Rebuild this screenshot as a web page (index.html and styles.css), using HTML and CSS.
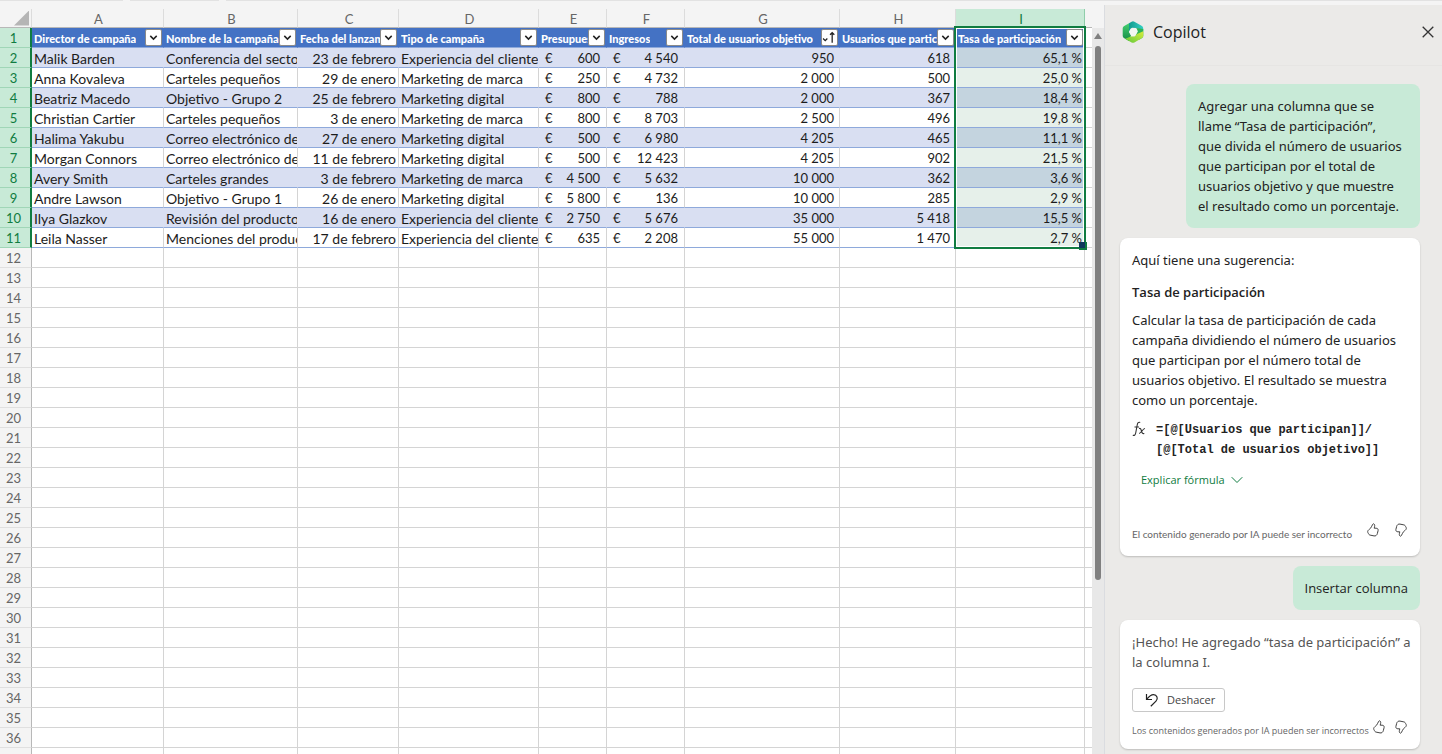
FILE: index.html
```html
<!DOCTYPE html>
<html lang="es">
<head>
<meta charset="utf-8">
<title>Campañas</title>
<link rel="stylesheet" href="styles.css">
</head>
<body>
<svg class="defs" width="0" height="0" aria-hidden="true">
  <symbol id="chev" viewBox="0 0 14 14"><path d="M4 5.5l3 3 3-3" fill="none" stroke="#222" stroke-width="1.4"/></symbol>
  <symbol id="sort" viewBox="0 0 14 14"><path d="M1 8l2 2 2-2" fill="none" stroke="#222" stroke-width="1.2"/><path d="M9.500 12V2.500M7.500 4.500l2-2 2 2" fill="none" stroke="#222" stroke-width="1.200"/></symbol>
  <symbol id="up" viewBox="0 0 14 14"><path d="M1.700 8.500C2 6.800 3.600 6.300 4.500 5.300 5.500 4 6 2.500 6.700 1.300 7.300.3 8.600.9 8.700 2.300 8.700 3.300 8.500 4.200 8.200 5.200h1.900c1.600 0 2.300 1.100 2 2.400l-.8 3.100c-.4 1.600-1.700 2.500-3.300 2.200L4.100 12.100C3 11.800 2.600 11.100 2.400 10.500 2.200 9.900 1.500 9.400 1.700 8.500z" fill="none" stroke="#444" stroke-width="1"/></symbol>
</svg>
<div class="ribbon"><span></span><span></span><span></span></div>
<div class="app">
  <main class="sheet">
    <div class="grid">
      <table>
        <colgroup><col class="w-n"><col class="w-a"><col class="w-b"><col class="w-c"><col class="w-d"><col class="w-e"><col class="w-f"><col class="w-g"><col class="w-h"><col class="w-i"><col></colgroup>
        <thead>
          <tr><th class="corner"><i></i></th><th>A</th><th>B</th><th>C</th><th>D</th><th>E</th><th>F</th><th>G</th><th>H</th><th class="active">I</th><th class="rest"></th></tr>
        </thead>
        <tbody class="data">
          <tr class="titles"><th>1</th>
            <td><div><span>Director de campaña</span><button aria-label="Filtrar director"><svg><use href="#chev"/></svg></button></div></td>
            <td><div><span>Nombre de la campaña</span><button aria-label="Filtrar nombre"><svg><use href="#chev"/></svg></button></div></td>
            <td><div><span>Fecha del lanzamiento</span><button aria-label="Filtrar fecha"><svg><use href="#chev"/></svg></button></div></td>
            <td><div><span>Tipo de campaña</span><button aria-label="Filtrar tipo"><svg><use href="#chev"/></svg></button></div></td>
            <td><div><span>Presupuesto</span><button aria-label="Filtrar presupuesto"><svg><use href="#chev"/></svg></button></div></td>
            <td><div><span>Ingresos</span><button aria-label="Filtrar ingresos"><svg><use href="#chev"/></svg></button></div></td>
            <td><div><span>Total de usuarios objetivo</span><button aria-label="Ordenar total"><svg><use href="#sort"/></svg></button></div></td>
            <td><div><span>Usuarios que participan</span><button aria-label="Filtrar usuarios"><svg><use href="#chev"/></svg></button></div></td>
            <td class="sel"><div><span>Tasa de participación</span><button aria-label="Filtrar tasa"><svg><use href="#chev"/></svg></button></div><b class="selection"></b></td><td class="rest"></td></tr>
          <tr><th>2</th><td>Malik Barden</td><td>Conferencia del sector</td><td>23 de febrero</td><td>Experiencia del cliente</td><td class="eur">600</td><td class="eur">4 540</td><td>950</td><td>618</td><td>65,1 %</td><td class="rest"></td></tr>
          <tr><th>3</th><td>Anna Kovaleva</td><td>Carteles pequeños</td><td>29 de enero</td><td>Marketing de marca</td><td class="eur">250</td><td class="eur">4 732</td><td>2 000</td><td>500</td><td>25,0 %</td><td class="rest"></td></tr>
          <tr><th>4</th><td>Beatriz Macedo</td><td>Objetivo - Grupo 2</td><td>25 de febrero</td><td>Marketing digital</td><td class="eur">800</td><td class="eur">788</td><td>2 000</td><td>367</td><td>18,4 %</td><td class="rest"></td></tr>
          <tr><th>5</th><td>Christian Cartier</td><td>Carteles pequeños</td><td>3 de enero</td><td>Marketing de marca</td><td class="eur">800</td><td class="eur">8 703</td><td>2 500</td><td>496</td><td>19,8 %</td><td class="rest"></td></tr>
          <tr><th>6</th><td>Halima Yakubu</td><td>Correo electrónico de</td><td>27 de enero</td><td>Marketing digital</td><td class="eur">500</td><td class="eur">6 980</td><td>4 205</td><td>465</td><td>11,1 %</td><td class="rest"></td></tr>
          <tr><th>7</th><td>Morgan Connors</td><td>Correo electrónico de</td><td>11 de febrero</td><td>Marketing digital</td><td class="eur">500</td><td class="eur">12 423</td><td>4 205</td><td>902</td><td>21,5 %</td><td class="rest"></td></tr>
          <tr><th>8</th><td>Avery Smith</td><td>Carteles grandes</td><td>3 de febrero</td><td>Marketing de marca</td><td class="eur">4 500</td><td class="eur">5 632</td><td>10 000</td><td>362</td><td>3,6 %</td><td class="rest"></td></tr>
          <tr><th>9</th><td>Andre Lawson</td><td>Objetivo - Grupo 1</td><td>26 de enero</td><td>Marketing digital</td><td class="eur">5 800</td><td class="eur">136</td><td>10 000</td><td>285</td><td>2,9 %</td><td class="rest"></td></tr>
          <tr><th>10</th><td>Ilya Glazkov</td><td>Revisión del producto</td><td>16 de enero</td><td>Experiencia del cliente</td><td class="eur">2 750</td><td class="eur">5 676</td><td>35 000</td><td>5 418</td><td>15,5 %</td><td class="rest"></td></tr>
          <tr><th>11</th><td>Leila Nasser</td><td>Menciones del producto</td><td>17 de febrero</td><td>Experiencia del cliente</td><td class="eur">635</td><td class="eur">2 208</td><td>55 000</td><td>1 470</td><td>2,7 %</td><td class="rest"></td></tr>
        </tbody>
        <tbody class="blank" id="blank"></tbody>
      </table>
    </div>
    <div class="scroll"><i class="arrow"></i><i class="thumb"></i></div>
  </main>
  <aside class="panel">
    <header>
      <svg class="logo" viewBox="0 0 22 22" aria-hidden="true">
        <defs>
          <linearGradient id="ga" x1="0" y1="0" x2="1" y2="0"><stop offset="0" stop-color="#129c8e"/><stop offset="1" stop-color="#35d0c4"/></linearGradient>
          <linearGradient id="gb" x1="0" y1="0" x2="0" y2="1"><stop offset="0" stop-color="#44d070"/><stop offset="1" stop-color="#148a45"/></linearGradient>
          <linearGradient id="gc" x1="0" y1="1" x2="1" y2="0"><stop offset="0" stop-color="#5fc93c"/><stop offset="1" stop-color="#d8ec3c"/></linearGradient>
        </defs>
        <path d="M7 2.200L1.800 5.200Q.7 6 .7 7.200v7.500q0 1.500 1.200 2.200l5 3L9 14.500 7 11z" fill="url(#gb)"/>
        <path d="M7 2.200L9.600.7q1.400-.8 2.800 0l7.600 4.400q1.200.7 1.200 2.200v2.500L14 7 10 6.800 7 11z" fill="url(#ga)"/>
        <path d="M21.300 8v7q0 1.200-1.200 2l-3 1.700-3.300-4L15 11l-.8-4z" fill="#2eb357"/>
        <path d="M3 17.700l6.600 3.700q1.400.8 2.800 0l7.600-4.500q1.300-.8 1.300-2.200v-4.500L15 13l-2.500 2.500H9z" fill="url(#gc)"/>
        <path d="M9.500 7.300h4q1 0 1.400.9l1 2.300-2.300 3.500q-.5.900-1.500.9H9.300L7 10.800l1.400-2.900q.3-.6 1.100-.6z" fill="#f2f7f1"/>
      </svg>
      <h1>Copilot</h1>
      <button class="close" aria-label="Cerrar"><svg viewBox="0 0 12 12"><path d="M.7.7l10.600 10.600M11.300.7L.7 11.300" stroke="#333" stroke-width="1.300"/></svg></button>
    </header>
    <div class="chat">
      <p class="bubble ask">Agregar una columna que se<br>llame “Tasa de participación”,<br>que divida el número de usuarios<br>que participan por el total de<br>usuarios objetivo y que muestre<br>el resultado como un porcentaje.</p>
      <section class="card">
        <p>Aquí tiene una sugerencia:</p>
        <h2>Tasa de participación</h2>
        <p>Calcular la tasa de participación de cada<br>campaña dividiendo el número de usuarios<br>que participan por el número total de<br>usuarios objetivo. El resultado se muestra<br>como un porcentaje.</p>
        <div class="formula">
          <svg viewBox="0 0 14 16" aria-hidden="true"><path d="M.8 14.200c1.700.7 2.500-.4 2.900-2.200L5.200 4c.4-2 1.200-3.200 3-2.600M2.500 6H7M7 7.500c1.600-.5 2 .5 2.500 2.500s1 3 2.800 2.500M13 7.500c-2-.3-4 5-6 5" fill="none" stroke="#333" stroke-width="1.100"/></svg>
          <code>=[@[Usuarios que participan]]/<br>[@[Total de usuarios objetivo]]</code>
        </div>
        <button class="explain">Explicar fórmula <svg viewBox="0 0 12 8"><path d="M.7 1.200L6 6.500l5.300-5.300" fill="none" stroke="#107c41" stroke-width="1"/></svg></button>
        <footer><small>El contenido generado por IA puede ser incorrecto</small><button aria-label="Me gusta"><svg><use href="#up"/></svg></button><button class="down" aria-label="No me gusta"><svg><use href="#up"/></svg></button></footer>
      </section>
      <button class="bubble insert">Insertar columna</button>
      <section class="card done">
        <p>¡Hecho! He agregado “tasa de participación” a<br>la columna I.</p>
        <button class="undo"><svg viewBox="0 0 14 14" aria-hidden="true"><path d="M1.500 1v5.500H7M1.800 6.200C4 3.500 6 1.700 8.500 1.700c3.500 0 5 4 2.500 6.500L5.800 13.300" fill="none" stroke="#222" stroke-width="1.200"/></svg>Deshacer</button>
        <footer><small>Los contenidos generados por IA pueden ser incorrectos</small><button aria-label="Me gusta"><svg><use href="#up"/></svg></button><button class="down" aria-label="No me gusta"><svg><use href="#up"/></svg></button></footer>
      </section>
    </div>
  </aside>
</div>
<script src="grid.js"></script>
</body>
</html>
```
FILE: grid.js
```js
// Append the unused rows below the data.
const blank = document.getElementById('blank');
for (let n = 12; n <= 37; n++) {
  const row = blank.insertRow();
  const head = document.createElement('th');
  head.textContent = n < 37 ? n : '';
  row.append(head);
  for (let c = 0; c < 10; c++) row.insertCell();
  row.lastElementChild.className = 'rest';
}
```
FILE: styles.css
```css
:root {
  --line: #d4d4d4;
  --green: #107c41;
  --mint: #c8ead7;
  --row: 20px;
}
* { box-sizing: border-box; }
body {
  margin: 0;
  height: 100vh;
  overflow: hidden;
  display: flex;
  flex-direction: column;
  background: #f4f4f4;
  color: #222;
  font-family: "Open Sans", "Noto Sans", sans-serif;
}
.defs { position: absolute; }
button { font: inherit; color: inherit; padding: 0; border: 0; background: none; display: flex; align-items: center; }
p, h1, h2 { margin: 0; }
.ribbon { display: flex; gap: 7px; height: 5px; flex: none; }
.ribbon span { height: 1px; background: #e2e2e2; width: 89px; }
.ribbon span:first-child { width: 123px; }
.ribbon span:last-child { flex: 1; }
.app { display: flex; flex: 1; min-height: 0; }

.sheet { flex: 1; min-width: 0; display: flex; }
.grid { flex: 1; min-width: 0; overflow: hidden; padding-top: 4px; }
table {
  width: 100%;
  table-layout: fixed;
  border-collapse: separate;
  border-spacing: 0;
  font-family: Lato, "Open Sans", sans-serif;
  font-size: 13px;
  line-height: 17px;
}
.w-n { width: 32px; } .w-a { width: 132px; } .w-b { width: 134px; } .w-c { width: 101px; }
.w-d { width: 140px; } .w-e { width: 68px; } .w-f { width: 78px; } .w-g { width: 155px; }
.w-h { width: 116px; } .w-i { width: 129px; }
th { font-weight: 400; padding: 2px 0 0; color: #666; text-align: center; }
thead th {
  height: 19px;
  line-height: 16px;
  border-right: 1px solid #dcdcdc;
  border-bottom: 1px solid #b8b8b8;
}
thead th:not(.corner) { padding-left: 2px; }
thead th.corner { padding-top: 0; }
thead th.rest { border-right: 0; }
thead .active { background: var(--mint); color: var(--green); border-color: #8fcdaa; }
.corner i { display: block; width: 15px; height: 15px; margin-left: 14px; background: #b5b5b5; clip-path: polygon(100% 0, 100% 100%, 0 100%); }
tbody th { height: var(--row); padding-right: 4px; border-right: 1px solid #b8b8b8; border-bottom: 1px solid #e0e0e0; }
.data th { background: var(--mint); color: var(--green); border-right: 2px solid var(--green); border-bottom-color: #a0d6b7; padding-right: 3px; }
td {
  height: var(--row);
  padding: 2px 2px 0;
  background: #fff;
  border-right: 1px solid var(--line);
  border-bottom: 1px solid var(--line);
  white-space: nowrap;
  overflow: hidden;
}
td.rest { border-right: 0; }
.data td { color: #1c1c1c; }
.data td:not(.rest) { border-bottom-color: #8ea9db; }
.data td:nth-child(-n+5) { font-size: 14px; padding-right: 0; }
.data td:nth-child(4) { text-align: right; padding-right: 2px; }
.data td:nth-child(8), .data td:nth-child(9) { text-align: right; padding-right: 5px; }
.data td:nth-child(10) { text-align: right; background: #e6f0ea; }
.data td.eur { text-align: right; padding-left: 6px; padding-right: 6px; }
.eur::before { content: "€"; float: left; }
.data tr:nth-child(even) td:not(.rest) { background: #d9dff2; border-right-color: #d9dff2; }
.data tr:nth-child(even) td:nth-child(10) { background: #c4d4df; }
.data .titles td:not(.rest) {
  background: #4472c4;
  border-right-color: #4472c4;
  color: #fff;
  font-weight: 900;
  font-size: 11px;
  text-align: left;
  padding: 0 1px 0 2px;
}
.titles div { display: flex; justify-content: space-between; align-items: center; height: 19px; }
.titles span { overflow: hidden; padding-top: 1px; }
.titles button { flex: none; width: 17px; height: 17px; background: #fff; border: 1px solid #8a8a8a; border-radius: 2px; }
.titles svg { width: 15px; height: 15px; }
.data .sel { position: relative; overflow: visible; }
.selection {
  position: absolute;
  top: -2px;
  left: -2px;
  right: -2px;
  height: calc(var(--row) * 11 + 3px);
  border: 2px solid var(--green);
  box-shadow: inset 0 0 0 1px #fff;
  pointer-events: none;
}
.selection::after { content: ""; position: absolute; right: -3px; bottom: -3px; width: 6px; height: 6px; background: #10385c; border: solid var(--green); border-width: 0 2px 2px 0; }
.scroll { width: 12px; margin-top: 23px; background: #e8e8e8; display: flex; flex-direction: column; align-items: center; gap: 7px; padding-top: 5px; }
.arrow { width: 8px; height: 6px; background: #808080; clip-path: polygon(50% 0, 100% 100%, 0 100%); }
.thumb { width: 6px; height: 74%; border-radius: 3px; background: #808080; }

.panel { width: 338px; flex: none; overflow: hidden; background: #ebeae8; border-left: 1px solid #dadce0; }
.panel header { display: flex; align-items: center; height: 61px; padding: 0 8px 6px 17px; gap: 9px; border-bottom: 1px solid #e6e5e3; }
.logo { width: 22px; height: 22px; }
.panel h1 { font-size: 16px; font-weight: 500; line-height: 22px; flex: 1; }
.close svg { width: 12px; height: 12px; }
.chat { display: flex; flex-direction: column; align-items: flex-end; gap: 10px; padding: 18px 22px 0 15px; font-size: 13px; line-height: 20px; }
.chat p { font-family: "Noto Sans", "Open Sans", sans-serif; }
.bubble { background: var(--mint); border-radius: 8px; padding: 12px; }
.ask { width: 234px; white-space: nowrap; }
.insert { height: 44px; }
.card { align-self: stretch; background: #fff; border-radius: 8px; padding: 12px; box-shadow: 0 1px 2px #0003; white-space: nowrap; }
.card h2 { font-size: 13px; font-weight: 600; line-height: 20px; margin: 12px 0 8px; }
.formula { display: flex; gap: 10px; margin-top: 10px; }
.formula svg { width: 14px; height: 16px; margin-top: 1px; }
.formula code { font: bold 12px/20px "Liberation Mono", monospace; }
.explain { margin: 11px 0 0 9px; color: var(--green); font-size: 11px; line-height: 18px; gap: 6px; }
.explain svg { width: 12px; height: 8px; }
.card footer { display: flex; align-items: center; margin-top: 27px; color: #666; }
.card small { font-family: Lato, "Open Sans", sans-serif; font-size: 10px; flex: 1; min-width: 0; line-height: 20px; padding-top: 8px; }
.card footer svg { display: block; width: 14px; height: 14px; }
.card footer button + button { margin-left: 14px; }
.down svg { transform: rotate(180deg); }
.done p { color: #555; }
.undo { gap: 8px; height: 24px; margin-top: 16px; padding: 0 9px 0 12px; border: 1px solid #c8c8c8; border-radius: 3px; font-size: 11px; color: #444; }
.undo svg { width: 14px; height: 14px; }
.card.done { padding-bottom: 8px; }
.card.done footer { margin-top: 1px; }
.card.done footer button + button { margin-left: 8px; }
.card.done small { font-family: inherit; font-size: 9px; }
```
